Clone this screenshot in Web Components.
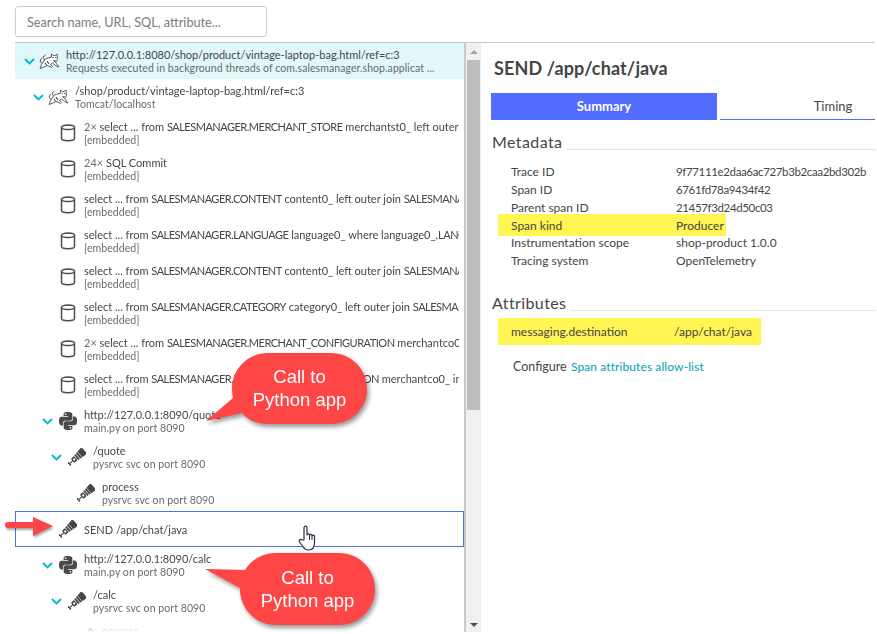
<!DOCTYPE html>
<html>
  <head>
    <meta charset="UTF-8">
    <title>Distributed trace: SEND /app/chat/java</title>
    <style>
      html, body {
        margin: 0;
        height: 100%;
        background: #fff;
        overflow: hidden;
      }
      body {
        font-family: "Lato", "Liberation Sans", sans-serif;
        color: #454646;
      }
      /* table names in the SQL rows run narrower than Lato's capitals */
      .t {
        letter-spacing: -.5px;
      }
      .n {
        color: #6b6b6b;
      }
    </style>
    <script type="text/javascript">
      const ICONS = {
        chevron: `<svg width="11" height="7" viewBox="0 0 11 7"><path d="M1 1l4.500 4.500L10 1" fill="none" stroke="#00b9cc" stroke-width="1.800"/></svg>`,
        tomcat: `<svg width="21" height="17" viewBox="0 0 21 17" fill="none" stroke="#4a4a4a" stroke-width=".9">
          <path fill="#fff" d="M1 15.500l4-1.500 3-1.500 3 1 1.500 1 1-1-2-2 2-1.500 3 2.500 3.500 1.500-3.500-4.500c1.500-1 2-2.500 1.800-4.500L18 1l-1.800 1.500h-2L12.600 1l-.4 3.500C9 4.700 7 5.500 5.500 7L3 10.500z"/>
          <path d="M5.500 7L4 4l2.500-2M3 10.500L1 8l1.500-3"/>
          <path stroke-width="1.200" d="M13.500 4.500h1.200M16 4.500h1.200M14.500 7.500l1.200.8 1-.8M8 8l2 3M6 10l1.500 2"/>
        </svg>`,
        db: `<svg width="16" height="18" viewBox="0 0 16 18" fill="none" stroke="#4a4a4a" stroke-width="1.500"><path d="M1.500 3.500v11c0 1.300 2.900 2.200 6.500 2.200s6.500-.9 6.500-2.200v-11"/><ellipse cx="8" cy="3.300" rx="6.500" ry="2.300"/></svg>`,
        python: `<svg width="18" height="18" viewBox="0 0 24 24" fill="#4a4a4a"><path d="M14.250.18l.9.2.73.26.59.3.45.32.34.34.25.34.16.33.1.3.04.26.02.2-.01.13V8.500l-.05.63-.13.55-.21.46-.26.38-.3.31-.33.25-.35.19-.35.14-.33.1-.3.07-.26.04-.21.02H8.770l-.69.05-.59.14-.5.22-.41.27-.33.32-.27.35-.2.36-.15.37-.1.35-.07.32-.04.27-.02.21v3.060H3.170l-.21-.03-.28-.07-.32-.12-.35-.18-.36-.26-.36-.36-.35-.46-.32-.59-.28-.73-.21-.88-.14-1.050-.05-1.230.06-1.220.16-1.040.24-.87.32-.71.36-.57.4-.44.42-.33.42-.24.4-.16.36-.1.32-.05.24-.01h.16l.06.01h8.160v-.83H6.180l-.01-2.750-.02-.37.05-.34.11-.31.17-.28.25-.26.31-.23.38-.2.44-.18.51-.15.58-.12.64-.1.71-.06.77-.04.84-.02 1.270.05zm-6.300 1.980l-.23.33-.08.41.08.41.23.34.33.22.41.09.41-.09.33-.22.23-.34.08-.41-.08-.41-.23-.33-.33-.22-.41-.09-.41.09zm13.090 3.950l.28.06.32.12.35.18.36.27.36.35.35.47.32.59.28.73.21.88.14 1.040.05 1.230-.06 1.230-.16 1.040-.24.86-.32.71-.36.57-.4.45-.42.33-.42.24-.4.16-.36.09-.32.05-.24.02-.16-.01h-8.220v.82h5.840l.01 2.760.02.36-.05.34-.11.31-.17.29-.25.25-.31.24-.38.2-.44.17-.51.15-.58.13-.64.09-.71.07-.77.04-.84.01-1.270-.04-1.070-.14-.9-.2-.73-.25-.59-.3-.45-.33-.34-.34-.25-.34-.16-.33-.1-.3-.04-.25-.02-.2.01-.13v-5.340l.05-.64.13-.54.21-.46.26-.38.3-.32.33-.24.35-.2.35-.14.33-.1.3-.06.26-.04.21-.02.13-.01h5.840l.69-.05.59-.14.5-.21.41-.28.33-.32.27-.35.2-.36.15-.36.1-.35.07-.32.04-.28.02-.21V6.070h2.090l.14.01zm-6.470 14.250l-.23.33-.08.41.08.41.23.33.33.23.41.08.41-.08.33-.23.23-.33.08-.41-.08-.41-.23-.33-.33-.23-.41-.08-.41.08z"/></svg>`,
        probe: `<svg width="18" height="18" viewBox="0 0 20 20" fill="#454646"><g transform="rotate(-42 10 10)">
          <rect x="-2" y="7.500" width="1.400" height="5"/>
          <rect x="-1" y="9.300" width="5" height="1.400"/>
          <rect x="3.500" y="7" width="4.800" height="6" rx="1"/>
          <circle cx="5.900" cy="10" r="1.300" fill="#fff"/>
          <path d="M9 6.600l2-.2v7.200l-2-.2z"/>
          <path d="M11.700 6.300l7.300-.9c1 0 2 .8 2 1.800v5.600c0 1-1 1.800-2 1.800l-7.300-.9z"/>
          <path d="M14 5.900v8.200" stroke="#fff" stroke-width=".6"/>
        </g></svg>`
      };

      const searchTemplate = document.createElement('template');
      searchTemplate.innerHTML = `
        <style>
          :host {
            display: block;
            width: 252px;
            height: 31px;
            margin-left: 15px;
          }
          input {
            box-sizing: border-box;
            width: 100%;
            height: 100%;
            padding: 0 11px;
            border: 1px solid #ccc;
            border-radius: 3px;
            font: 12.700px "Lato", "Liberation Sans", sans-serif;
            color: #454646;
          }
          input::placeholder {
            color: #7c7c7c;
            opacity: 1;
          }
        </style>
        <input placeholder="Search name, URL, SQL, attribute...">
      `;

      class TraceSearch extends HTMLElement {
        constructor() {
          super();
          this.attachShadow({mode: 'open'});
          this.shadowRoot.appendChild(searchTemplate.content.cloneNode(true));
        }
      }
      customElements.define('trace-search', TraceSearch);

      const rowTemplate = document.createElement('template');
      rowTemplate.innerHTML = `
        <style>
          :host {
            display: block;
            box-sizing: border-box;
            height: 36px;
            overflow: hidden;
          }
          :host([active]) {
            background: #e1f7f9;
          }
          :host([selected]) {
            border: 1px solid #4f6fe6;
          }
          :host([selected]) .sub {
            display: none;
          }
          :host([selected]) .text {
            padding-top: 1px;
          }
          .row {
            display: flex;
            align-items: center;
            height: 100%;
            padding-right: 5px;
            white-space: nowrap;
          }
          .toggle {
            flex: none;
            width: 11px;
            height: 7px;
            margin-right: 4px;
            display: flex;
          }
          .icon {
            flex: none;
            width: 21px;
            margin-right: 6px;
            display: flex;
            justify-content: center;
          }
          .text {
            min-width: 0;
            overflow: hidden;
            font-size: 11px;
            line-height: 13px;
          }
          .sub {
            margin-top: 1px;
            color: #6b6b6b;
            font-size: 10.500px;
            letter-spacing: .07px;
          }
        </style>
        <div class="row">
          <span class="toggle"></span>
          <span class="icon"></span>
          <div class="text">
            <div class="main"><slot></slot></div>
            <div class="sub"><slot name="sub"></slot></div>
          </div>
        </div>
      `;

      class TraceRow extends HTMLElement {
        constructor() {
          super();
          this.attachShadow({mode: 'open'});
          this.shadowRoot.appendChild(rowTemplate.content.cloneNode(true));
        }

        connectedCallback() {
          const root = this.shadowRoot;
          const level = parseInt(this.getAttribute('level'), 10) || 0;
          // 9px per tree level
          let left = 9 + level * 9;
          if (this.hasAttribute('selected')) left -= 1; // the border takes a pixel
          root.querySelector('.row').style.paddingLeft = left + 'px';
          if (this.hasAttribute('open')) {
            root.querySelector('.toggle').innerHTML = ICONS.chevron;
          }
          root.querySelector('.icon').innerHTML = ICONS[this.getAttribute('icon')] || '';
        }
      }
      customElements.define('trace-row', TraceRow);

      const treeTemplate = document.createElement('template');
      treeTemplate.innerHTML = `
        <style>
          :host {
            display: flex;
            flex: none;
            width: 467px;
            height: 589px;
            position: relative;
          }
          .list {
            flex: none;
            width: 449px;
            height: 100%;
            overflow: hidden;
            -webkit-mask-image: linear-gradient(to bottom, #000 575px, transparent 589px);
            mask-image: linear-gradient(to bottom, #000 575px, transparent 589px);
          }
          .bar {
            flex: none;
            width: 15px;
            margin-left: 2px;
            background: #f0f0f0;
            box-shadow: -2px 0 0 #c9c9c9;
            display: flex;
            flex-direction: column;
            align-items: center;
          }
          .up, .down {
            width: 0;
            height: 0;
            border-left: 4px solid transparent;
            border-right: 4px solid transparent;
            flex: none;
          }
          .up {
            border-bottom: 4px solid #a3a3a3;
            margin-top: 7px;
          }
          .thumb {
            width: 13px;
            height: 350px;
            margin-top: 6px;
            background: #bdbdbd;
            flex: none;
          }
          .down {
            border-top: 4px solid #505050;
            margin-top: auto;
            margin-bottom: 5px;
          }
        </style>
        <div class="list"><slot></slot></div>
        <div class="bar">
          <div class="up"></div>
          <div class="thumb"></div>
          <div class="down"></div>
        </div>
      `;

      class TraceTree extends HTMLElement {
        constructor() {
          super();
          this.attachShadow({mode: 'open'});
          this.shadowRoot.appendChild(treeTemplate.content.cloneNode(true));
        }
      }
      customElements.define('trace-tree', TraceTree);

      const tabsTemplate = document.createElement('template');
      tabsTemplate.innerHTML = `
        <style>
          :host {
            display: grid;
            grid-template-columns: 226px 1fr;
            column-gap: 3px;
            height: 27px;
            margin-left: 9px;
            font-size: 13px;
            text-align: center;
            line-height: 26px;
          }
          .on {
            background: #526cff;
            color: #fff;
            font-weight: 700;
          }
          .off {
            border-bottom: 1px solid #526cff;
            padding-left: 71px;
            height: 26px;
          }
        </style>
        <div class="on">Summary</div>
        <div class="off">Timing</div>
      `;

      class DetailTabs extends HTMLElement {
        constructor() {
          super();
          this.attachShadow({mode: 'open'});
          this.shadowRoot.appendChild(tabsTemplate.content.cloneNode(true));
        }
      }
      customElements.define('detail-tabs', DetailTabs);

      const sectionTemplate = document.createElement('template');
      sectionTemplate.innerHTML = `
        <style>
          :host {
            display: block;
            margin-left: 10px;
          }
          .head {
            display: flex;
            align-items: flex-end;
            height: 20px;
            gap: 4px;
            font-size: 16px;
            line-height: 20px;
            letter-spacing: .4px;
          }
          .head::after {
            content: "";
            flex: 1;
            border-bottom: 1px solid #e4e4e4;
            margin-bottom: 2px;
          }
        </style>
        <div class="head"><slot name="title"></slot></div>
        <slot></slot>
      `;

      class DetailSection extends HTMLElement {
        constructor() {
          super();
          this.attachShadow({mode: 'open'});
          this.shadowRoot.appendChild(sectionTemplate.content.cloneNode(true));
        }
      }
      customElements.define('detail-section', DetailSection);

      const pairTemplate = document.createElement('template');
      pairTemplate.innerHTML = `
        <style>
          :host {
            display: grid;
            grid-template-columns: 165px max-content;
            height: 18px;
            line-height: 18px;
            font-size: 12px;
            padding-left: 19px;
          }
          :host([hex]) .value {
            font-size: 11.500px;
            letter-spacing: -.36px;
          }
        </style>
        <div><slot name="key"></slot></div>
        <div class="value"><slot></slot></div>
      `;

      class MetaPair extends HTMLElement {
        constructor() {
          super();
          this.attachShadow({mode: 'open'});
          this.shadowRoot.appendChild(pairTemplate.content.cloneNode(true));
        }
      }
      customElements.define('meta-pair', MetaPair);

      const markTemplate = document.createElement('template');
      markTemplate.innerHTML = `
        <style>
          :host {
            display: block;
            background: #fff553;
            margin-left: 6px;
          }
        </style>
        <slot></slot>
      `;

      class YellowMark extends HTMLElement {
        constructor() {
          super();
          this.attachShadow({mode: 'open'});
          this.shadowRoot.appendChild(markTemplate.content.cloneNode(true));
        }
      }
      customElements.define('yellow-mark', YellowMark);

      const calloutTemplate = document.createElement('template');
      calloutTemplate.innerHTML = `
        <style>
          :host {
            position: absolute;
            display: block;
            width: 175px;
            height: 90px;
            font: 18.500px/23px "Liberation Sans", Arial, sans-serif;
            color: #fff;
          }
          svg {
            position: absolute;
            left: 0;
            top: 0;
            overflow: visible;
            filter: drop-shadow(2px 3px 2px rgba(0,0,0,.4));
          }
          .text {
            position: absolute;
            left: 28px;
            width: 135px;
            top: 15px;
            text-align: center;
          }
        </style>
        <svg width="175" height="90" viewBox="0 0 175 90">
          <path fill="#ff4646"></path>
        </svg>
        <div class="text"><slot></slot></div>
      `;

      class RedCallout extends HTMLElement {
        constructor() {
          super();
          this.attachShadow({mode: 'open'});
          this.shadowRoot.appendChild(calloutTemplate.content.cloneNode(true));
        }

        connectedCallback() {
          const d = this.getAttribute('d');
          this.shadowRoot.querySelector('path').setAttribute('d', d);
        }
      }
      customElements.define('red-callout', RedCallout);

      const appTemplate = document.createElement('template');
      appTemplate.innerHTML = `
        <style>
          :host {
            display: block;
            position: relative;
            width: 877px;
            height: 634px;
            overflow: hidden;
            padding-top: 6px;
            box-sizing: border-box;
          }
          .split {
            display: flex;
            margin: 5px 2px 0 15px;
            border-top: 1px solid #c9c9c9;
          }
          .detail {
            flex: 1;
            min-width: 0;
          }
        </style>
        <slot name="search"></slot>
        <div class="split">
          <slot name="tree"></slot>
          <div class="detail"><slot name="detail"></slot></div>
        </div>
        <slot name="overlay"></slot>
      `;

      class TraceApp extends HTMLElement {
        constructor() {
          super();
          this.attachShadow({mode: 'open'});
          this.shadowRoot.appendChild(appTemplate.content.cloneNode(true));
        }
      }
      customElements.define('trace-app', TraceApp);
    </script>
  </head>
  <body>
    <trace-app>
      <trace-search slot="search"></trace-search>

      <trace-tree slot="tree">
        <trace-row level="0" icon="tomcat" open active>http://127.0.0.1:8080/shop/product/vintage-laptop-bag.html/ref=c:3<span slot="sub">Requests executed in background threads of com.salesmanager.shop.applicat ...</span></trace-row>
        <trace-row level="1" icon="tomcat" open>/shop/product/vintage-laptop-bag.html/ref=c:3<span slot="sub">Tomcat/localhost</span></trace-row>
        <trace-row level="2" icon="db"><span class="n">2×</span> select ... from <span class="t">SALESMANAGER.MERCHANT_STORE</span> merchantst0_ left outer join <span class="t">SALESMANAGER</span><span slot="sub">[embedded]</span></trace-row>
        <trace-row level="2" icon="db"><span class="n">24×</span> SQL Commit<span slot="sub">[embedded]</span></trace-row>
        <trace-row level="2" icon="db">select ... from <span class="t">SALESMANAGER.CONTENT</span> content0_ left outer join <span class="t">SALESMANAGER</span><span slot="sub">[embedded]</span></trace-row>
        <trace-row level="2" icon="db">select ... from <span class="t">SALESMANAGER.LANGUAGE</span> language0_ where language0_.<span class="t">LANGUAGE</span><span slot="sub">[embedded]</span></trace-row>
        <trace-row level="2" icon="db">select ... from <span class="t">SALESMANAGER.CONTENT</span> content0_ left outer join <span class="t">SALESMANAGER</span><span slot="sub">[embedded]</span></trace-row>
        <trace-row level="2" icon="db">select ... from <span class="t">SALESMANAGER.CATEGORY</span> category0_ left outer join <span class="t">SALESMANAGER</span><span slot="sub">[embedded]</span></trace-row>
        <trace-row level="2" icon="db"><span class="n">2×</span> select ... from <span class="t">SALESMANAGER.MERCHANT_CONFIGURATION</span> merchantco0_ left<span slot="sub">[embedded]</span></trace-row>
        <trace-row level="2" icon="db">select ... from <span class="t">SALESMANAGER.MERCHANT_CONFIGURATION</span> merchantco0_ inner join<span slot="sub">[embedded]</span></trace-row>
        <trace-row level="2" icon="python" open>http://127.0.0.1:8090/quote<span slot="sub">main.py on port 8090</span></trace-row>
        <trace-row level="3" icon="probe" open>/quote<span slot="sub">pysrvc svc on port 8090</span></trace-row>
        <trace-row level="4" icon="probe">process<span slot="sub">pysrvc svc on port 8090</span></trace-row>
        <trace-row level="2" icon="probe" selected>SEND /app/chat/java</trace-row>
        <trace-row level="2" icon="python" open>http://127.0.0.1:8090/calc<span slot="sub">main.py on port 8090</span></trace-row>
        <trace-row level="3" icon="probe" open>/calc<span slot="sub">pysrvc svc on port 8090</span></trace-row>
        <trace-row level="4" icon="probe">process<span slot="sub">pysrvc svc on port 8090</span></trace-row>
      </trace-tree>

      <div slot="detail">
        <h1 style="margin:0 0 0 12px;padding:13px 0 12px;font-size:18px;line-height:25px;font-weight:700;letter-spacing:.12px">SEND /app/chat/java</h1>
        <detail-tabs></detail-tabs>
        <detail-section style="margin-top:12px">
          <span slot="title">Metadata</span>
          <div style="height:11px"></div>
          <meta-pair hex><span slot="key">Trace ID</span>9f77111e2daa6ac727b3b2caa2bd302b</meta-pair>
          <meta-pair hex><span slot="key">Span ID</span>6761fd78a9434f42</meta-pair>
          <meta-pair hex><span slot="key">Parent span ID</span>21457f3d24d50c03</meta-pair>
          <yellow-mark style="width:228px;margin-top:-3px;padding:3px 0 1px"><meta-pair style="padding-left:13px"><span slot="key">Span kind</span>Producer</meta-pair></yellow-mark>
          <meta-pair style="margin-top:-2px"><span slot="key">Instrumentation scope</span>shop-product 1.0.0</meta-pair>
          <meta-pair><span slot="key">Tracing system</span>OpenTelemetry</meta-pair>
        </detail-section>
        <detail-section style="margin-top:23px">
          <span slot="title">Attributes</span>
          <yellow-mark style="width:263px;margin-top:5px;padding:5px 0 4px"><meta-pair style="padding-left:13px;grid-template-columns:163px max-content"><span slot="key">messaging.destination</span>/app/chat/java</meta-pair></yellow-mark>
          <div style="margin:13px 0 0 21px;font-size:12.500px;line-height:18px">Configure <span style="color:#00a1b2;font-size:12px;margin-left:1px;letter-spacing:.1px">Span attributes allow-list</span></div>
        </detail-section>
      </div>

      <!-- overlays drawn on the screenshot -->
      <red-callout slot="overlay" style="left:204px;top:350px" d="M64 3h63c20 0 36 16 36 36s-16 35-36 35H64c-11 0-20-4-26-11L2 71l27-23c-.6-3-1-6-1-9C28 19 44 3 64 3z">Call to<br>Python app</red-callout>
      <red-callout slot="overlay" style="left:212px;top:551px" d="M64 2h63c20 0 36 16 36 36s-16 36-36 36H64c-20 0-36-16-36-36v-1L-7 18l40 1C39 9 50 2 64 2z">Call to<br>Python app</red-callout>

      <svg slot="overlay" style="position:absolute;left:5px;top:515px;filter:drop-shadow(1px 2px 1px rgba(0,0,0,.35))" width="50" height="24" viewBox="0 0 50 24">
        <path d="M3 7h25V2l20 9-20 10v-8H3c-2 0-3-1-3-3s1-3 3-3z" fill="#ff4646"/>
      </svg>

      <svg slot="overlay" style="position:absolute;left:298px;top:525px" width="20" height="26" viewBox="0 0 20 26">
        <path d="M6 15V3c0-2.500 3-2.500 3 0v7c0-1.500 2.500-1.500 2.500 0v.5c0-1.500 2.500-1.500 2.500 0v.7c0-1.400 2.500-1.400 2.500 0V18c0 4-2 7-6 7-3 0-4.500-1.500-6-4l-3-4c-1-2 1-3.500 2.500-2z" fill="#fff" stroke="#2c2f3c" stroke-width="1.200" stroke-linejoin="round"/>
        <path d="M11.500 11v4M14 11.500V15" stroke="#2c2f3c" stroke-width="1"/>
      </svg>
    </trace-app>
  </body>
</html>
